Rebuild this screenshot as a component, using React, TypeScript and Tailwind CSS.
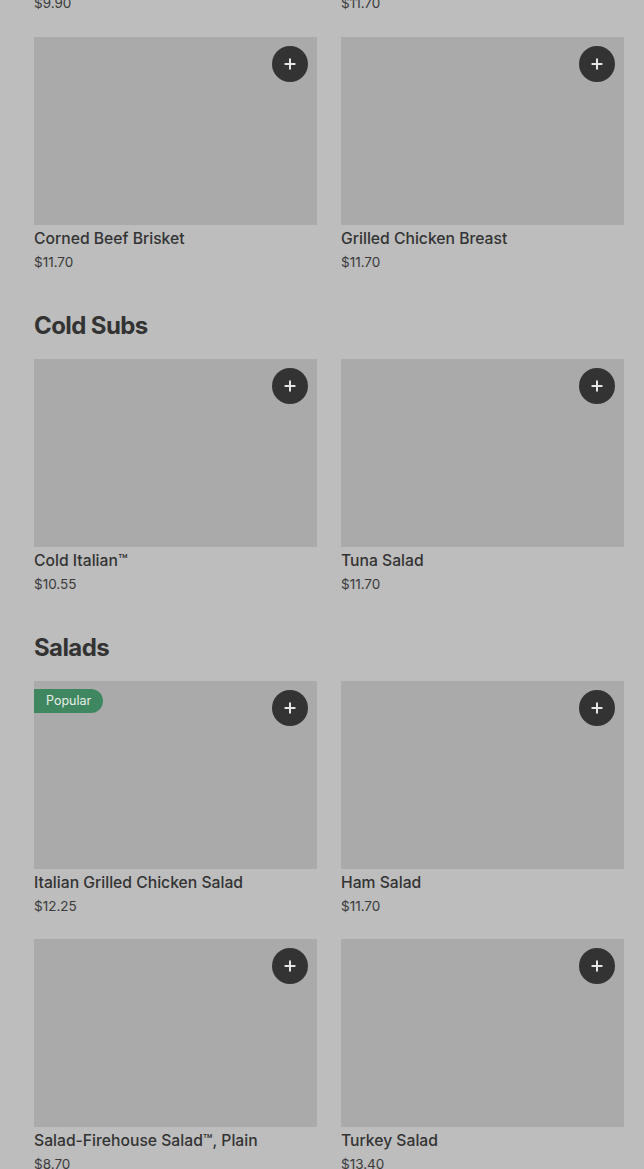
import { Plus } from "lucide-react";

interface Item {
  name: string;
  price: string;
  popular?: boolean;
}

const sections: { title?: string; items: Item[] }[] = [
  {
    items: [
      { name: "Corned Beef Brisket", price: "$11.70" },
      { name: "Grilled Chicken Breast", price: "$11.70" },
    ],
  },
  {
    title: "Cold Subs",
    items: [
      { name: "Cold Italian™", price: "$10.55" },
      { name: "Tuna Salad", price: "$11.70" },
    ],
  },
  {
    title: "Salads",
    items: [
      { name: "Italian Grilled Chicken Salad", price: "$12.25", popular: true },
      { name: "Ham Salad", price: "$11.70" },
      { name: "Salad-Firehouse Salad™, Plain", price: "$8.70" },
      { name: "Turkey Salad", price: "$13.40" },
    ],
  },
];

function MenuCard({ item }: { item: Item }) {
  return (
    <div className="flex flex-col">
      <div className="relative h-[188px] bg-[#aaaaaa]">
        {item.popular && (
          <span className="absolute left-0 top-2 h-6 pl-3 pr-3 flex items-center rounded-r-full bg-[#3f8760] text-[#e8efe9] text-[12.5px] leading-none">
            Popular
          </span>
        )}
        <button className="absolute right-[9px] top-[9px] w-9 h-9 rounded-full bg-[#333333] flex items-center justify-center">
          <Plus className="w-4 h-4 text-[#e6e6e6]" strokeWidth={3} />
        </button>
      </div>
      <p className="mt-[2px] text-[15.7px] leading-6 text-[#333333] font-medium">{item.name}</p>
      <p className="text-[13.5px] leading-[22px] text-[#3a3a3a]">{item.price}</p>
    </div>
  );
}

export default function App() {
  return (
    <div
      className="min-h-[1169px] bg-[#bdbdbd] pl-[34px] pr-5 overflow-hidden"
      style={{ fontFamily: "Inter, 'Noto Sans', sans-serif" }}
    >
      <div className="grid grid-cols-2 gap-x-6 -mt-[8px] text-[13.5px] leading-[22px] text-[#3a3a3a]">
        <p>$9.90</p>
        <p>$11.70</p>
      </div>

      {sections.map((section, i) => (
        <div key={i}>
          {section.title ? (
            <h2 className="mt-[39px] mb-[19px] text-[24px] leading-7 font-bold tracking-[-0.6px] text-[#333333]">
              {section.title}
            </h2>
          ) : (
            <div className="h-[23px]" />
          )}
          <div className="grid grid-cols-2 gap-x-6 gap-y-[22px]">
            {section.items.map((item) => (
              <MenuCard key={item.name} item={item} />
            ))}
          </div>
        </div>
      ))}
    </div>
  );
}
